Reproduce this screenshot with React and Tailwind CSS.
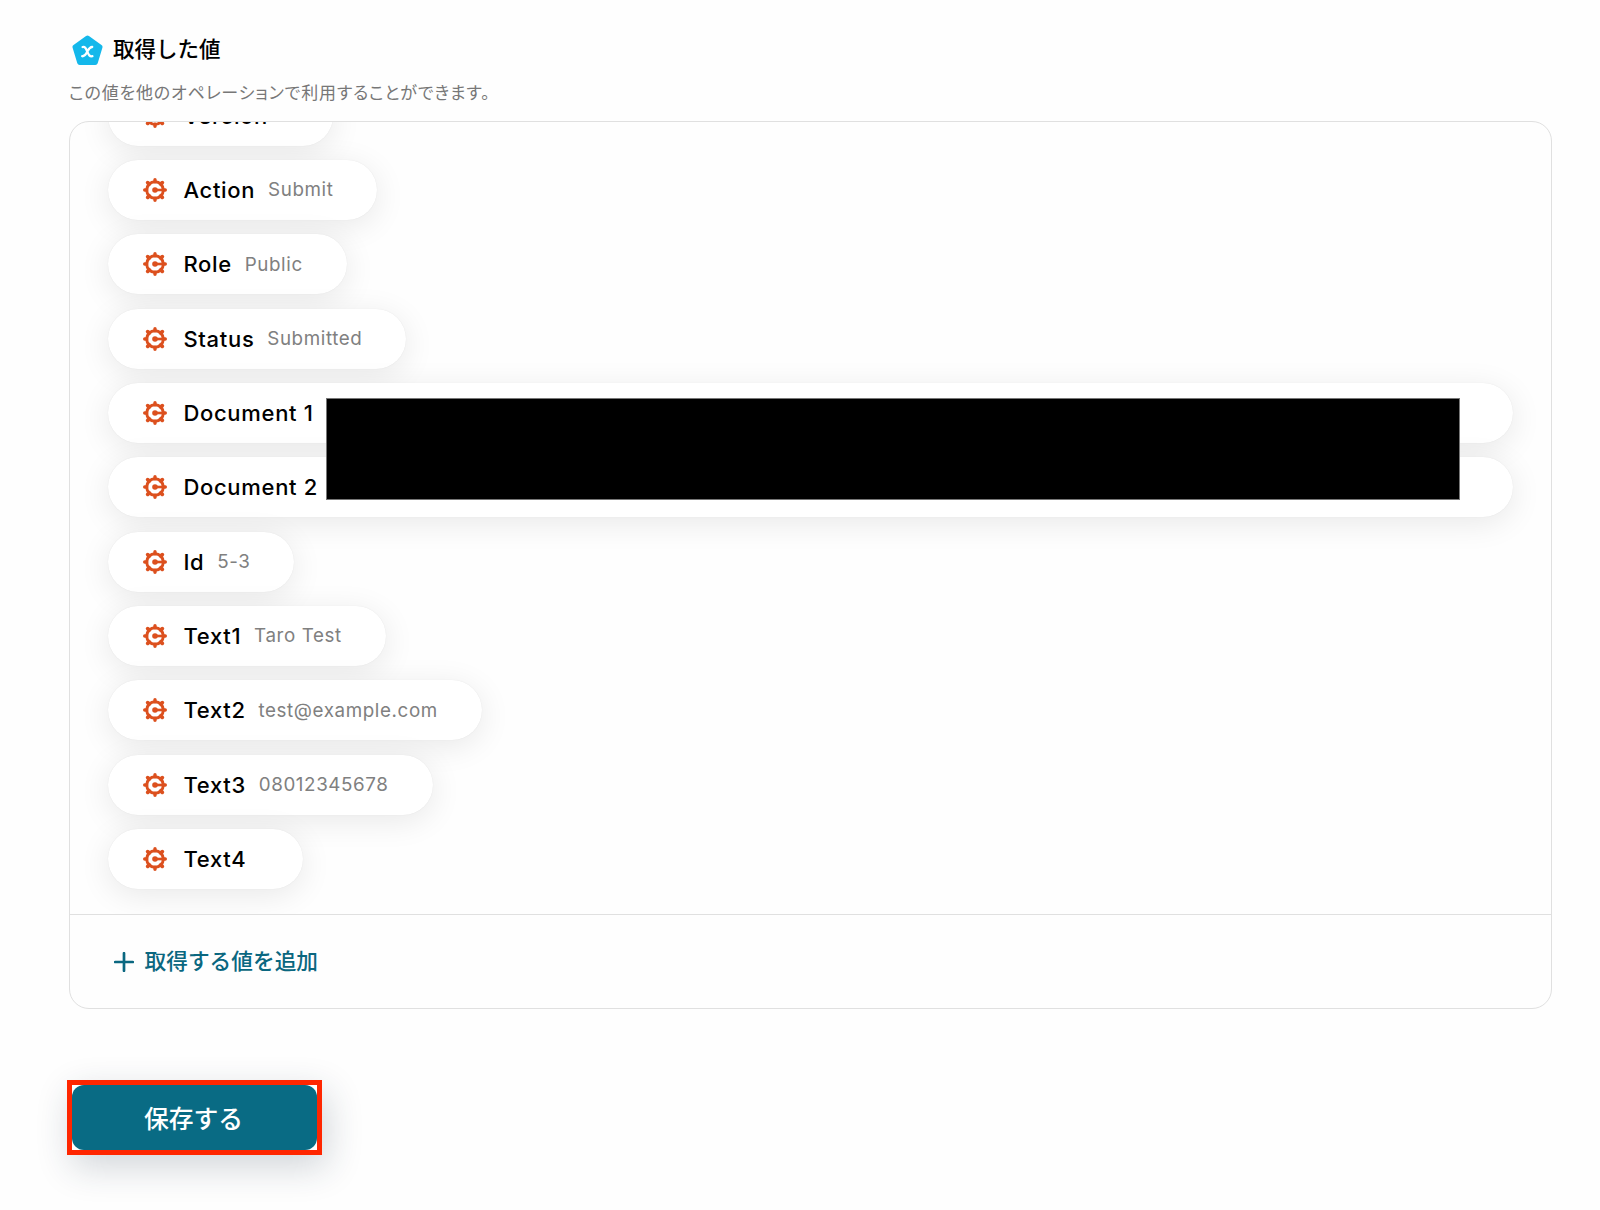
const values = [
  { name: 'Version', value: '1' },
  { name: 'Action', value: 'Submit' },
  { name: 'Role', value: 'Public' },
  { name: 'Status', value: 'Submitted' },
  { name: 'Document 1', value: '', wide: true },
  { name: 'Document 2', value: '', wide: true },
  { name: 'Id', value: '5-3' },
  { name: 'Text1', value: 'Taro Test' },
  { name: 'Text2', value: 'test@example.com' },
  { name: 'Text3', value: '08012345678' },
  { name: 'Text4', value: '' },
];

function ValueLogo() {
  return (
    <svg className="w-[31px] h-[31px] mt-px shrink-0" viewBox="0 0 31 31" fill="none">
      <path
        d="M15.5 3 L28 12 L23.3 27.5 L7.7 27.5 L3 12 Z"
        fill="#14b8eb"
        stroke="#14b8eb"
        strokeWidth="5"
        strokeLinejoin="round"
      />
      <path
        d="M10.6 12 C13.2 11.4 13.8 13.2 15.3 16.6 C16.8 20 17.6 21.8 20.4 21.2 M20.2 12 C17.8 11.8 16.8 14 15.3 16.6 C13.8 19.2 12.8 21.6 10.2 21.2"
        stroke="#fff"
        strokeWidth="2.3"
        strokeLinecap="round"
      />
    </svg>
  );
}

function GearIcon() {
  return (
    <svg className="w-6 h-6 shrink-0" viewBox="0 0 24 24" fill="none" stroke="#dc501e">
      <circle cx="12" cy="12" r="8.3" strokeWidth="2.9" />
      <path d="M12 1.7v2M12 20.3v2M1.7 12h2M20.3 12h2" strokeWidth="3.4" strokeLinecap="round" />
      <path
        d="M4.7 4.7l1.5 1.5M17.8 6.2l1.5-1.5M4.7 19.3l1.5-1.5M17.8 17.8l1.5 1.5"
        strokeWidth="3.8"
        strokeLinecap="round"
      />
      <path d="M12 12h8" strokeWidth="2.6" />
      <circle cx="12" cy="12" r="2.8" fill="#dc501e" stroke="none" />
    </svg>
  );
}

function ValuePill({ name, value, wide }) {
  return (
    <div
      className={`flex items-center h-[60px] shrink-0 rounded-full bg-white pl-[35px] pr-[44px] shadow-[0_6px_32px_rgba(0,0,0,0.09),0_0_1px_rgba(0,0,0,0.1)] ${
        wide ? 'w-full' : ''
      }`}
    >
      <GearIcon />
      <span className="ml-[16.4px] pt-px text-[22px] font-[540] tracking-[0.7px] text-black whitespace-pre">{name}</span>
      <span className="ml-[12.8px] pt-px text-[18.8px] tracking-[0.6px] text-[#808080] whitespace-pre">{value}</span>
    </div>
  );
}

function App() {
  return (
    <div className="w-[1600px] h-[1210px] overflow-hidden bg-[#fefefe] pl-[69px] pt-[34px] font-['Inter','Noto_Sans_CJK_JP',sans-serif]">
      <div className="flex items-center h-[31px] gap-[10px] pl-[3px]">
        <ValueLogo />
        <h2 className="text-[21.5px] font-medium leading-[31px] text-black">取得した値</h2>
      </div>
      <p className="mt-[15px] h-[26px] text-[17px] leading-[26px] tracking-[0.82px] text-[#777] [font-feature-settings:'palt']">
        この値を他のオペレーションで利用することができます。
      </p>

      <div className="relative mt-[15px] w-[1483px] h-[888px] flex flex-col rounded-[20px] border border-[#e0e0e0]">
        <div className="h-[793px] flex flex-col justify-end items-start gap-[14.35px] overflow-hidden rounded-t-[19px] border-b border-[#e0e0e0] pl-[38px] pr-[38.5px] pb-[25px]">
          {values.map((item) => (
            <ValuePill key={item.name} {...item} />
          ))}
        </div>
        <button className="flex flex-1 items-center gap-[11px] pl-[43.5px] text-[21.7px] font-medium text-[#0a6780]">
          <svg className="w-5 h-5" viewBox="0 0 20 20" stroke="currentColor" strokeWidth="2.7" strokeLinecap="round">
            <path d="M10 1.2v17.6M1.2 10h17.6" />
          </svg>
          取得する値を追加
        </button>

        {/* redacted document urls */}
        <div className="absolute left-[256px] top-[276px] w-[1134px] h-[102px] border border-[#777] bg-black" />
      </div>

      <div className="mt-[71px] -ml-[2px] w-[255px] h-[75px] border-[5px] border-[#ff2600] shadow-[5px_12px_36px_rgba(30,50,70,0.2)]">
        <button className="w-full h-full rounded-xl bg-[#096b84] pt-[4px] pr-[2px] text-[24.8px] font-medium text-white">
          保存する
        </button>
      </div>
    </div>
  );
}

export default App;
